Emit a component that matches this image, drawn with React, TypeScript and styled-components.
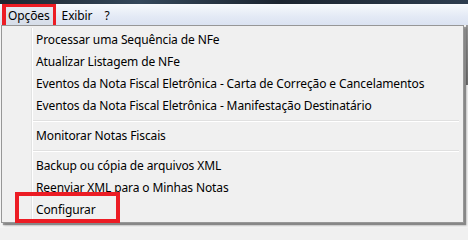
import React from 'react'
import styled, { createGlobalStyle } from 'styled-components'

const GlobalStyle = createGlobalStyle`
  html, body {
    margin: 0;
    padding: 0;
    background: #f0f0f0;
  }
  *, *::before, *::after {
    box-sizing: border-box;
  }
`

const Window = styled.div`
  position: relative;
  width: 468px;
  height: 228px;
  overflow: hidden;
  background: #f4f4f4;
  font-family: 'Noto Sans', 'Liberation Sans', sans-serif;
  font-size: 12px;
  letter-spacing: -0.12px;
  color: #000;
`

const TitleEdge = styled.div`
  height: 4px;
  background: linear-gradient(90deg, #1d2630 0%, #34475a 30%, #1b2430 60%, #2d3d4f 100%);
`

const MenuBar = styled.div`
  display: flex;
  align-items: stretch;
  height: 21px;
  padding-left: 2px;
  border-top: 1px solid #f8fafd;
  background: linear-gradient(#f5f8fc, #e3e9f5 60%, #dbe3f2);
`

const BarItem = styled.div<{ $open?: boolean; $marked?: boolean }>`
  position: relative;
  display: flex;
  align-items: center;
  padding: 0 5px 1px;
  background: ${(p) => (p.$open ? 'linear-gradient(#e4e9f1, #d6dde8)' : 'transparent')};
  border: 1px solid ${(p) => (p.$open ? '#9aa5b5' : 'transparent')};
  border-bottom: none;

  ${(p) =>
    p.$marked &&
    `
    &::after {
      content: '';
      position: absolute;
      left: -1px;
      right: -1px;
      top: -2px;
      bottom: -3px;
      border: 3px solid #ec1c24;
      border-left-width: 4px;
    }
  `}
`

const Dropdown = styled.div`
  position: absolute;
  left: 1px;
  top: 25px;
  width: 463px;
  height: 198px;
  padding: 2px;
  background: #f0f0f0;
  border: 1px solid #979797;
  box-shadow: 2px 2px 1px rgba(0, 0, 0, 0.35), 3px 3px 2px rgba(0, 0, 0, 0.15);
  display: flex;
  flex-direction: column;

  &::before {
    content: '';
    position: absolute;
    top: 2px;
    bottom: 2px;
    left: 29px;
    width: 2px;
    border-left: 1px solid #e2e3e3;
    border-right: 1px solid #ffffff;
  }
`

const Item = styled.div<{ $marked?: boolean }>`
  position: relative;
  height: 22px;
  display: flex;
  align-items: center;
  padding-left: 32px;
  white-space: nowrap;

  ${(p) =>
    p.$marked &&
    `
    &::after {
      content: '';
      position: absolute;
      left: 11px;
      width: 105px;
      top: -6px;
      bottom: -3px;
      border: 4px solid #ec1c24;
    }
  `}
`

const Separator = styled.div`
  margin: 4px 2px 2px 28px;
  height: 2px;
  border-top: 1px solid #e0e0e0;
  border-bottom: 1px solid #ffffff;
`

const EdgeStrip = styled.div`
  position: absolute;
  right: 0;
  top: 25px;
  width: 2px;
  height: 60px;
  background: linear-gradient(#9a9a9a, #6f6f6f);
`

type Entry = { label: string; marked?: boolean } | 'sep'

const entries: Entry[] = [
  { label: 'Processar uma Sequência de NFe' },
  { label: 'Atualizar Listagem de NFe' },
  { label: 'Eventos da Nota Fiscal Eletrônica - Carta de Correção e Cancelamentos' },
  { label: 'Eventos da Nota Fiscal Eletrônica - Manifestação Destinatário' },
  'sep',
  { label: 'Monitorar Notas Fiscais' },
  'sep',
  { label: 'Backup ou cópia de arquivos XML' },
  { label: 'Reenviar XML para o Minhas Notas' },
  { label: 'Configurar', marked: true },
]

const App: React.FC = () => {
  return (
    <>
      <GlobalStyle />
      <Window>
        <TitleEdge />
        <MenuBar>
          <BarItem $open $marked>
            Opções
          </BarItem>
          <BarItem>Exibir</BarItem>
          <BarItem>?</BarItem>
        </MenuBar>
        <EdgeStrip />
        <Dropdown>
          {entries.map((e, i) =>
            e === 'sep' ? (
              <Separator key={i} />
            ) : (
              <Item key={i} $marked={e.marked}>
                {e.label}
              </Item>
            )
          )}
        </Dropdown>
      </Window>
    </>
  )
}

export default App
